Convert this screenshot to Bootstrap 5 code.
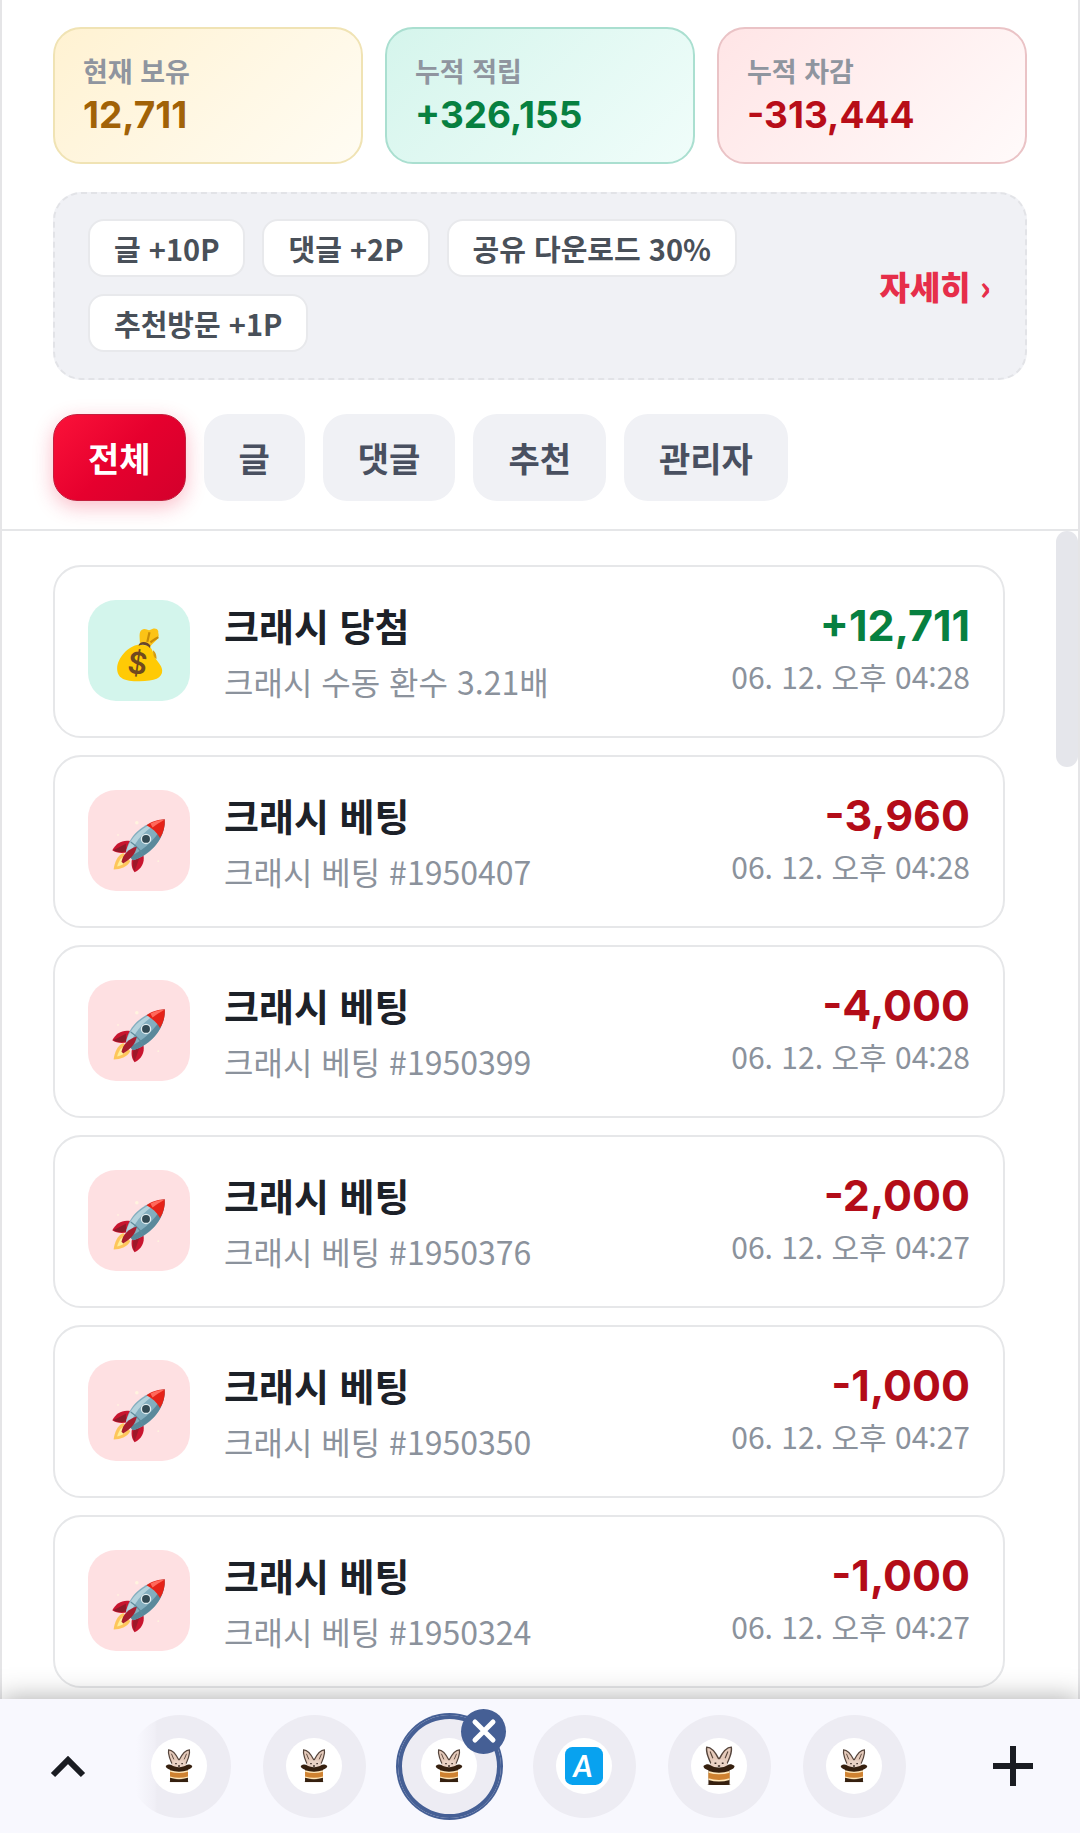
<!DOCTYPE html>
<html lang="ko">
<head>
<meta charset="utf-8">
<meta name="viewport" content="width=device-width, initial-scale=1">
<title>포인트 내역</title>
<link href="https://cdn.jsdelivr.net/npm/bootstrap@5.3.0/dist/css/bootstrap.min.css" rel="stylesheet">
<style>
body{font-family:"Noto Sans CJK KR","Noto Sans",sans-serif;background:#fff;color:#1c2128}
.sheet{border-left:2px solid #e5e5e7;border-right:2px solid #e5e5e7}
.sheet-head{padding:27px 51px 28px;border-bottom:2px solid #e5e6e8}
.stats{gap:22px;margin-bottom:28px}
.stat{flex:1 1 0;border:2px solid;border-radius:28px;padding:24px 28px 22px}
.stat dt{font-size:27px;line-height:36px;font-weight:600;color:#8f959f}
.stat dd{font-family:Inter,sans-serif;font-size:37px;line-height:51px;font-weight:700;margin:0}
.stat-hold{background:linear-gradient(135deg,#fff2d2,#fffcf3);border-color:#f0e3b4;color:#a16207}
.stat-plus{background:linear-gradient(135deg,#d5f5ec,#f0fdfa);border-color:#aadfd0;color:#078040}
.stat-minus{background:linear-gradient(135deg,#ffe5e6,#fffafa);border-color:#eac3c6;color:#b80d18}
.rules{border:2px dashed #e2e3e7;border-radius:28px;background:#f0f1f5;padding:25px 34px 26px 33px;margin-bottom:34px}
.chips{gap:17px}
.chip{border:2px solid #e8e9ec;border-radius:16px;background:#fff;padding:0 24px;font-size:29px;line-height:54px;font-weight:600;color:#495059}
.more{font-size:33px;line-height:40px;font-weight:900;color:#e62e4a;white-space:nowrap}
.tabs{gap:18px}
.tab{border:1px solid transparent;border-radius:24px;background:#f0f1f5;padding:0 34px;font-size:34px;line-height:85px;font-weight:700;color:#495060}
.tab.active{background:linear-gradient(135deg,#fb1239,#e6002e 50%,#d3002c);border-color:#c3213f;color:#fff;box-shadow:0 6px 20px rgba(240,20,60,.28)}
.history{padding:34px 73px 0 51px;gap:17px;min-height:0}
.entry{border:2px solid #e6e7e9;border-radius:28px;padding:32px 33px 34px;gap:34px;height:173px;flex:none}
.tile{width:102px;height:101px;border-radius:28px;background:#fee0e2;flex:none}
.tile-win{background:#d3f5ec}
.tile svg{width:56px;height:56px;margin-top:8px}
.entry-text{padding-top:4px}
.entry h2{font-size:38px;line-height:52px;font-weight:700;margin:0 0 4px}
.entry p{font-size:32px;line-height:52px;margin:0;color:#8b929c}
.amount{font-family:Inter,sans-serif;font-size:43px;line-height:50px;font-weight:700;color:#b30c18}
.amount.win{color:#078040}
.entry time{font-size:30px;line-height:52px;color:#8b929c}
.thumb{top:0;right:0;width:22px;height:236px;border-radius:11px;background:#e5e6eb}
.dock{height:134px;background:#f8f8fe;box-shadow:0 0 26px rgba(0,0,0,.34);z-index:5;padding:0 33px 0 34px}
.dock button{border:0;background:none;padding:0}
.dock-tool{width:68px;height:68px}
.dock-items{gap:32px;margin-right:48px}
.dock .site{width:103px;height:103px;border-radius:50%;background:#edecf3}
.dock .site.faded{background:linear-gradient(90deg,rgba(237,236,243,0) 8%,#f0eff6 26%,#edecf3 28%)}
.dock .site.current{box-shadow:inset 0 0 0 4px #455f95,0 0 0 2px #455f95}
.disc{width:56px;height:56px;border-radius:50%;background:#fff}
.disc svg{width:34px;height:34px}
.disc svg.big{width:40px;height:40px}
.disc svg.app{width:38px;height:38px}
.dock .closer{position:absolute;top:-6px;right:-5px;width:45px;height:45px;border-radius:50%;background:#455f95}
.slot{position:relative}
</style>
</head>
<body>
<svg class="d-none" aria-hidden="true">
<symbol id="rabbit" viewBox="0 0 36 36">
<path d="M12 18C9 13 6 5 7 1c4 0 8 5 11 11 3-6 7-11 11-11 1 4-2 12-5 17z" fill="#e6cbbb" stroke="#55453c" stroke-width="1.3"/>
<path d="M12.500 11L10 5M23.500 11L26 5" stroke="#59463b" stroke-width="1"/>
<path d="M11 19c-2-4 2-7 7-7s9 3 7 7z" fill="#ead2c4"/>
<path d="M14 15.500h1.600M20.500 15.500h1.600M17 18h2" stroke="#382b25" stroke-width="1.400"/>
<path d="M4 18c2-2 5-2 6-1 4 3 12 3 16 0 1-1 4-1 6 1 0 2-3 4-6 4H10c-3 0-6-2-6-4z" fill="#36200f"/>
<path d="M8.500 21h19v14h-19z" fill="#36200f"/>
<path d="M8.500 22.500q9.500 3 19 0v8q-9.500 3-19 0z" fill="#ffe6b8"/>
<path d="M8.500 24q9.500 3 19 0v5q-9.500 3-19 0z" fill="#cf8231"/>
<path d="M7 35q11-2 22 0z" fill="#36200f"/>
</symbol>
<symbol id="rocket" viewBox="0 0 128 128">
<path d="M28 82C14 88 8 104 6 120c16-1 31-6 38-19z" fill="#fdc65c"/><path d="M26 92c-7 6-10 14-12 21 8-2 16-5 21-12z" fill="#fff09a"/>
<path d="M44 55C25 52 12 60 3 76c9 6 22 8 36 4z" fill="#c8152f"/><path d="M34 61L5 76c9 5 19 5 29 2z" fill="#8e1928"/>
<path d="M74 86c4 18-5 33-20 40-7-7-9-20-5-35z" fill="#c8152f"/><path d="M65 93L54 124c-5-8-5-18-2-27z" fill="#9e1829"/>
<path d="M34 82C38 47 70 12 123 5c1 47-34 82-73 94z" fill="#83aebf"/><path d="M34 82C42 47 75 16 120 8 84 24 55 50 43 89z" fill="#b4d2dc"/>
<path d="M50 99c34-10 73-43 73-91-13 35-43 65-80 83z" fill="#5a899b"/>
<path d="M45 57c7 5 22 18 28 29" fill="none" stroke="#608c9c" stroke-width="3"/>
<path d="M81 19C92 10 108 6 123 5c1 16-3 31-11 43-7-13-18-22-31-29z" fill="#e52318"/><path d="M90 15c10-6 21-9 32-9-10 6-19 11-27 18z" fill="#ff695b"/>
<circle cx="80" cy="50" r="12" fill="#e1edf0"/><circle cx="80" cy="50" r="9" fill="#334b55"/>
<path d="M24 102c3-15 15-30 35-34-3 18-18 31-31 38z" fill="#a81d2d"/>
<circle cx="59" cy="13" r="4" fill="#fff4df"/><circle cx="16" cy="41" r="2" fill="#fff4df"/><circle cx="108" cy="101" r="2" fill="#fff4df"/>
</symbol>
<symbol id="bag" viewBox="0 0 128 128">
<path d="M66 36C66 23 63 13 70 7c8-6 14 2 19 0 7-4 15-6 19 2-1 5 3 10 0 15-4 8-14 14-19 21z" fill="#fcc316"/>
<path d="M83 34l5-22M90 35c8-6 14-9 18-12" fill="none" stroke="#c78b08" stroke-width="5"/>
<path d="M64 40c-26 4-49 31-50 54 0 22 15 30 51 30 36 0 52-8 52-24 0-14-13-21-18-34-3-10-7-19-12-23z" fill="#ffca05"/>
<path d="M96 53c7 5 8 13 8 20-5-2-8-8-8-20z" fill="#d39b12"/>
<path d="M63 43c1-12 22-11 27 0l-1 5c-7-8-18-9-26-5z" fill="#67452b"/>
<text x="61" y="107" text-anchor="middle" font-family="Inter,sans-serif" font-size="68" font-weight="600" fill="#70491f" transform="rotate(8 61 82)">$</text>
</symbol>
</svg>

<div class="vh-100 d-flex flex-column">
<main class="sheet d-flex flex-column flex-grow-1 overflow-hidden">
<header class="sheet-head">
<dl class="stats d-flex">
<div class="stat stat-hold"><dt>현재 보유</dt><dd>12,711</dd></div>
<div class="stat stat-plus"><dt>누적 적립</dt><dd>+326,155</dd></div>
<div class="stat stat-minus"><dt>누적 차감</dt><dd>-313,444</dd></div>
</dl>
<section class="rules d-flex align-items-center justify-content-between">
<div class="chips d-flex flex-wrap">
<span class="chip">글 +10P</span><span class="chip">댓글 +2P</span><span class="chip">공유 다운로드 30%</span><span class="chip">추천방문 +1P</span>
</div>
<a class="more text-decoration-none" href="#">자세히 ›</a>
</section>
<div class="tabs d-flex">
<button type="button" class="tab active">전체</button>
<button type="button" class="tab">글</button>
<button type="button" class="tab">댓글</button>
<button type="button" class="tab">추천</button>
<button type="button" class="tab">관리자</button>
</div>
</header>
<section class="history d-flex flex-column flex-grow-1 position-relative">
<div class="thumb position-absolute"></div>
<article class="entry d-flex align-items-center">
<div class="tile tile-win d-flex align-items-center justify-content-center"><svg aria-hidden="true"><use href="#bag"/></svg></div>
<div class="entry-text flex-grow-1"><h2>크래시 당첨</h2><p>크래시 수동 환수 3.21배</p></div>
<div class="d-flex flex-column text-end"><span class="amount win">+12,711</span><time>06. 12. 오후 04:28</time></div>
</article>
<article class="entry d-flex align-items-center">
<div class="tile d-flex align-items-center justify-content-center"><svg aria-hidden="true"><use href="#rocket"/></svg></div>
<div class="entry-text flex-grow-1"><h2>크래시 베팅</h2><p>크래시 베팅 #1950407</p></div>
<div class="d-flex flex-column text-end"><span class="amount">-3,960</span><time>06. 12. 오후 04:28</time></div>
</article>
<article class="entry d-flex align-items-center">
<div class="tile d-flex align-items-center justify-content-center"><svg aria-hidden="true"><use href="#rocket"/></svg></div>
<div class="entry-text flex-grow-1"><h2>크래시 베팅</h2><p>크래시 베팅 #1950399</p></div>
<div class="d-flex flex-column text-end"><span class="amount">-4,000</span><time>06. 12. 오후 04:28</time></div>
</article>
<article class="entry d-flex align-items-center">
<div class="tile d-flex align-items-center justify-content-center"><svg aria-hidden="true"><use href="#rocket"/></svg></div>
<div class="entry-text flex-grow-1"><h2>크래시 베팅</h2><p>크래시 베팅 #1950376</p></div>
<div class="d-flex flex-column text-end"><span class="amount">-2,000</span><time>06. 12. 오후 04:27</time></div>
</article>
<article class="entry d-flex align-items-center">
<div class="tile d-flex align-items-center justify-content-center"><svg aria-hidden="true"><use href="#rocket"/></svg></div>
<div class="entry-text flex-grow-1"><h2>크래시 베팅</h2><p>크래시 베팅 #1950350</p></div>
<div class="d-flex flex-column text-end"><span class="amount">-1,000</span><time>06. 12. 오후 04:27</time></div>
</article>
<article class="entry d-flex align-items-center">
<div class="tile d-flex align-items-center justify-content-center"><svg aria-hidden="true"><use href="#rocket"/></svg></div>
<div class="entry-text flex-grow-1"><h2>크래시 베팅</h2><p>크래시 베팅 #1950324</p></div>
<div class="d-flex flex-column text-end"><span class="amount">-1,000</span><time>06. 12. 오후 04:27</time></div>
</article>
</section>
</main>
<nav class="dock d-flex align-items-center justify-content-between flex-shrink-0 position-relative">
<button type="button" class="dock-tool" aria-label="펼치기"><svg width="68" height="68" fill="none" stroke="#1a1c22" stroke-width="6"><path d="M19 43L34 28l15 15"/></svg></button>
<div class="dock-items d-flex">
<div class="slot"><button type="button" class="site faded d-flex align-items-center justify-content-center" aria-label="탭 1"><span class="disc d-flex align-items-center justify-content-center"><svg><use href="#rabbit"/></svg></span></button></div>
<div class="slot"><button type="button" class="site d-flex align-items-center justify-content-center" aria-label="탭 2"><span class="disc d-flex align-items-center justify-content-center"><svg><use href="#rabbit"/></svg></span></button></div>
<div class="slot"><button type="button" class="site current d-flex align-items-center justify-content-center" aria-label="탭 3"><span class="disc d-flex align-items-center justify-content-center"><svg><use href="#rabbit"/></svg></span></button><button type="button" class="closer" aria-label="닫기"><svg class="d-block" width="45" height="45" stroke="#fff" stroke-width="5" stroke-linecap="round"><path d="M14 13l18 18M32 13L14 31"/></svg></button></div>
<div class="slot"><button type="button" class="site d-flex align-items-center justify-content-center" aria-label="탭 4"><span class="disc d-flex align-items-center justify-content-center"><svg class="app overflow-visible" viewBox="0 0 36 36"><rect width="36" height="36" rx="7" fill="#08a2ef"/><text x="17" y="28" text-anchor="middle" font-family="Lato,sans-serif" font-size="28" font-weight="700" font-style="italic" fill="#fff">A</text></svg></span></button></div>
<div class="slot"><button type="button" class="site d-flex align-items-center justify-content-center" aria-label="탭 5"><span class="disc d-flex align-items-center justify-content-center"><svg class="big"><use href="#rabbit"/></svg></span></button></div>
<div class="slot"><button type="button" class="site d-flex align-items-center justify-content-center" aria-label="탭 6"><span class="disc d-flex align-items-center justify-content-center"><svg><use href="#rabbit"/></svg></span></button></div>
</div>
<button type="button" class="dock-tool" aria-label="새 탭"><svg width="68" height="68" stroke="#1a1c22" stroke-width="6"><path d="M34 14v40M14 34h40"/></svg></button>
</nav>
</div>
<script src="https://cdn.jsdelivr.net/npm/bootstrap@5.3.0/dist/js/bootstrap.bundle.min.js"></script>
</body>
</html>
